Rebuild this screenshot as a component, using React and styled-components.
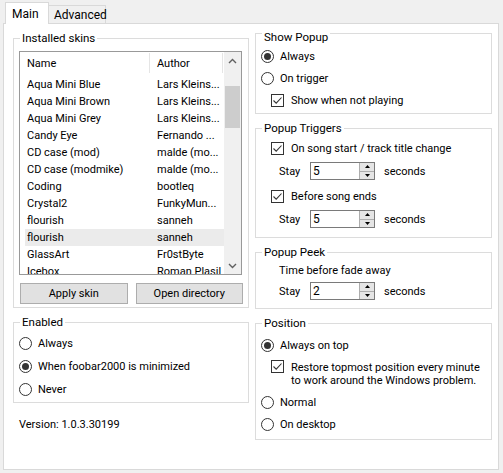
import React from 'react';
import styled, { createGlobalStyle } from 'styled-components';

const GlobalStyle = createGlobalStyle`
  body {
    margin: 0;
    background: #f0f0f0;
    font-family: Roboto, "Liberation Sans", sans-serif;
    font-size: 11px;
    color: #000;
  }
`;

const Window = styled.div`
  width: 503px;
  height: 473px;
  background: #f0f0f0;
  overflow: hidden;
`;

const TabRow = styled.div`
  display: flex;
  align-items: flex-end;
  height: 23px;
  padding-left: 5px;
`;

const Tab = styled.div`
  box-sizing: border-box;
  display: flex;
  align-items: center;
  border: 1px solid #d9d9d9;
  border-bottom: none;
  padding: 0 6px;
  font-size: 12px;
  ${(p) =>
    p.$active
      ? `
    height: 22px;
    margin-bottom: -1px;
    background: #fff;
    position: relative;
    z-index: 1;
    width: 44px;
  `
      : `
    height: 18px;
    background: #f0f0f0;
    border-left: none;
    width: 57px;
    padding-left: 5px;
  `}
`;

const Panel = styled.div`
  box-sizing: border-box;
  margin-left: 3px;
  width: 496px;
  height: 447px;
  background: #fff;
  border: 1px solid #d9d9d9;
  display: grid;
  grid-template-columns: 236px 237px;
  column-gap: 6px;
  padding-left: 9px;
  align-items: start;
`;

const Column = styled.div`
  display: flex;
  flex-direction: column;
  gap: 14px;
  margin-top: ${(p) => p.$top}px;
`;

const Group = styled.div`
  box-sizing: border-box;
  position: relative;
  border: 1px solid #dcdcdc;
  height: ${(p) => p.$h}px;
  padding: ${(p) => p.$pad || '0'};
  display: flex;
  flex-direction: column;
`;

const Legend = styled.span`
  position: absolute;
  left: 6px;
  top: ${(p) => (p.$low ? -5 : -9)}px;
  line-height: 16px;
  padding: 0 2px;
  background: #fff;
  font-size: 11.5px;
`;

const OptionRow = styled.div`
  display: flex;
  align-items: center;
  height: ${(p) => p.$h || 22}px;
  padding-left: ${(p) => p.$indent || 0}px;
  gap: ${(p) => p.$gap || 6}px;
  white-space: nowrap;
`;

const Radio = styled.span`
  box-sizing: border-box;
  width: 13px;
  height: 13px;
  border: 1px solid #333;
  border-radius: 50%;
  flex: none;
  display: flex;
  align-items: center;
  justify-content: center;
  &::after {
    content: '';
    width: 7px;
    height: 7px;
    border-radius: 50%;
    background: ${(p) => (p.$on ? '#333' : 'transparent')};
  }
`;

const Box = styled.span`
  box-sizing: border-box;
  width: 13px;
  height: 13px;
  border: 1px solid #333;
  background: #fff;
  flex: none;
  display: flex;
  align-items: center;
  justify-content: center;
  align-self: ${(p) => (p.$top ? 'flex-start' : 'center')};
  margin-top: ${(p) => (p.$top ? 4 : 0)}px;
`;

const MultiLine = styled.span`
  line-height: 13px;
  white-space: nowrap;
`;

const StayRow = styled.div`
  display: flex;
  align-items: center;
  height: ${(p) => p.$h || 22}px;
  padding-left: 18px;
`;

const StayLabel = styled.span`
  width: 31px;
`;

const Spinner = styled.div`
  box-sizing: border-box;
  width: 65px;
  height: 18px;
  border: 1px solid #7a7a7a;
  display: flex;
  align-items: stretch;
  margin-right: 9px;
`;

const SpinValue = styled.span`
  flex: 1;
  padding-left: 2px;
  line-height: 16px;
  font-size: 12px;
`;

const SpinButtons = styled.div`
  width: 14px;
  display: flex;
  flex-direction: column;
  border-left: 1px solid #adadad;
`;

const SpinButton = styled.div`
  flex: 1;
  background: #e5e5e5;
  display: flex;
  align-items: center;
  justify-content: center;
  border-bottom: ${(p) => (p.$first ? '1px solid #adadad' : 'none')};
`;

const List = styled.div`
  box-sizing: border-box;
  width: 223px;
  height: 224px;
  border: 1px solid #999;
  display: flex;
  overflow: hidden;
`;

const ListMain = styled.div`
  flex: 1;
  display: flex;
  flex-direction: column;
  overflow: hidden;
`;

const Header = styled.div`
  display: grid;
  grid-template-columns: 130px 73px;
  height: 24px;
  flex: none;
`;

const HeaderCell = styled.div`
  display: flex;
  align-items: center;
  padding-left: 7px;
  border-right: 1px solid #e5e5e5;
  margin: 1px 0 3px;
`;

const Row = styled.div`
  display: grid;
  grid-template-columns: 130px 1fr;
  height: 17px;
  align-items: center;
  margin-left: 5px;
  padding-left: 2px;
  flex: none;
  background: ${(p) => (p.$hot ? '#ebebeb' : 'transparent')};
  white-space: nowrap;
`;

const ScrollBar = styled.div`
  width: 17px;
  background: #f0f0f0;
  display: flex;
  flex-direction: column;
  align-items: center;
`;

const ScrollArrow = styled.div`
  height: 17px;
  width: 17px;
  display: flex;
  align-items: center;
  justify-content: center;
  flex: none;
`;

const Track = styled.div`
  flex: 1;
  width: 100%;
  padding-top: 17px;
  box-sizing: border-box;
  display: flex;
  justify-content: center;
`;

const Thumb = styled.div`
  width: 15px;
  height: 42px;
  background: #cdcdcd;
`;

const ButtonRow = styled.div`
  display: flex;
  gap: 8px;
  margin-top: 8px;
  padding-left: 1px;
`;

const Button = styled.div`
  box-sizing: border-box;
  width: 108px;
  height: 21px;
  background: #e1e1e1;
  border: 1px solid #adadad;
  display: flex;
  align-items: center;
  justify-content: center;
`;

const Version = styled.div`
  padding-left: 6px;
  line-height: 16px;
`;

const Chevron = ({ down }) => (
  <svg width="9" height="6" viewBox="0 0 9 6">
    <path
      d={down ? 'M1 1 L4.5 4.5 L8 1' : 'M1 5 L4.5 1.5 L8 5'}
      fill="none"
      stroke="#606060"
      strokeWidth="1.4"
    />
  </svg>
);

const Tick = () => (
  <svg width="11" height="11" viewBox="0 0 11 11">
    <path d="M1.5 5.5 L4.2 8.2 L9.5 2.5" fill="none" stroke="#333" strokeWidth="1.1" />
  </svg>
);

const Triangle = ({ down }) => (
  <svg width="5" height="3" viewBox="0 0 5 3">
    <path d={down ? 'M0 0 L5 0 L2.5 3 Z' : 'M0 3 L5 3 L2.5 0 Z'} fill="#000" />
  </svg>
);

const RadioOption = ({ on, children, h, indent }) => (
  <OptionRow $h={h} $indent={indent}>
    <Radio $on={on} />
    <span>{children}</span>
  </OptionRow>
);

const CheckOption = ({ children, h, indent }) => (
  <OptionRow $h={h} $indent={indent} $gap={7}>
    <Box>
      <Tick />
    </Box>
    <span>{children}</span>
  </OptionRow>
);

const Stay = ({ value, h }) => (
  <StayRow $h={h}>
    <StayLabel>Stay</StayLabel>
    <Spinner>
      <SpinValue>{value}</SpinValue>
      <SpinButtons>
        <SpinButton $first>
          <Triangle />
        </SpinButton>
        <SpinButton>
          <Triangle down />
        </SpinButton>
      </SpinButtons>
    </Spinner>
    <span>seconds</span>
  </StayRow>
);

const skins = [
  ['Aqua Mini Blue', 'Lars Kleins...'],
  ['Aqua Mini Brown', 'Lars Kleins...'],
  ['Aqua Mini Grey', 'Lars Kleins...'],
  ['Candy Eye', 'Fernando ...'],
  ['CD case (mod)', 'malde (mo...'],
  ['CD case (modmike)', 'malde (mo...'],
  ['Coding', 'bootleq'],
  ['Crystal2', 'FunkyMun...'],
  ['flourish', 'sanneh'],
  ['flourish', 'sanneh', true],
  ['GlassArt', 'Fr0stByte'],
  ['Icebox', 'Roman Plasil'],
];

const App = () => {
  return (
    <Window>
      <GlobalStyle />
      <TabRow>
        <Tab $active>Main</Tab>
        <Tab>Advanced</Tab>
      </TabRow>
      <Panel>
        <Column $top={14}>
          <Group $h={270} $pad="12px 5px 0 5px">
            <Legend>Installed skins</Legend>
            <List>
              <ListMain>
                <Header>
                  <HeaderCell>Name</HeaderCell>
                  <HeaderCell>Author</HeaderCell>
                </Header>
                {skins.map(([name, author, hot], i) => (
                  <Row key={i} $hot={hot}>
                    <span>{name}</span>
                    <span>{author}</span>
                  </Row>
                ))}
              </ListMain>
              <ScrollBar>
                <ScrollArrow>
                  <Chevron />
                </ScrollArrow>
                <Track>
                  <Thumb />
                </Track>
                <ScrollArrow>
                  <Chevron down />
                </ScrollArrow>
              </ScrollBar>
            </List>
            <ButtonRow>
              <Button>Apply skin</Button>
              <Button>Open directory</Button>
            </ButtonRow>
          </Group>
          <Group $h={81} $pad="9px 5px 0 5px">
            <Legend>Enabled</Legend>
            <RadioOption h={23}>Always</RadioOption>
            <RadioOption h={23} on>
              When foobar2000 is minimized
            </RadioOption>
            <RadioOption h={23}>Never</RadioOption>
          </Group>
          <Version>Version: 1.0.3.30199</Version>
        </Column>

        <Column $top={9}>
          <Group $h={81} $pad="11px 5px 0 5px">
            <Legend $low>Show Popup</Legend>
            <RadioOption on>Always</RadioOption>
            <RadioOption>On trigger</RadioOption>
            <CheckOption indent={10}>Show when not playing</CheckOption>
          </Group>
          <Group $h={110} $pad="8px 5px 0 5px">
            <Legend>Popup Triggers</Legend>
            <CheckOption indent={10}>On song start / track title change</CheckOption>
            <Stay value="5" h={24} />
            <CheckOption indent={10} h={26}>
              Before song ends
            </CheckOption>
            <Stay value="5" h={20} />
          </Group>
          <Group $h={57} $pad="8px 5px 0 5px">
            <Legend>Popup Peek</Legend>
            <StayRow $h={18}>Time before fade away</StayRow>
            <Stay value="2" h={24} />
          </Group>
          <Group $h={117} $pad="10px 5px 0 5px">
            <Legend>Position</Legend>
            <RadioOption on>Always on top</RadioOption>
            <OptionRow $h={35} $indent={10} $gap={7}>
              <Box $top>
                <Tick />
              </Box>
              <MultiLine>
                Restore topmost position every minute
                <br />
                to work around the Windows problem.
              </MultiLine>
            </OptionRow>
            <RadioOption h={22}>Normal</RadioOption>
            <RadioOption h={23}>On desktop</RadioOption>
          </Group>
        </Column>
      </Panel>
    </Window>
  );
};

export default App;
